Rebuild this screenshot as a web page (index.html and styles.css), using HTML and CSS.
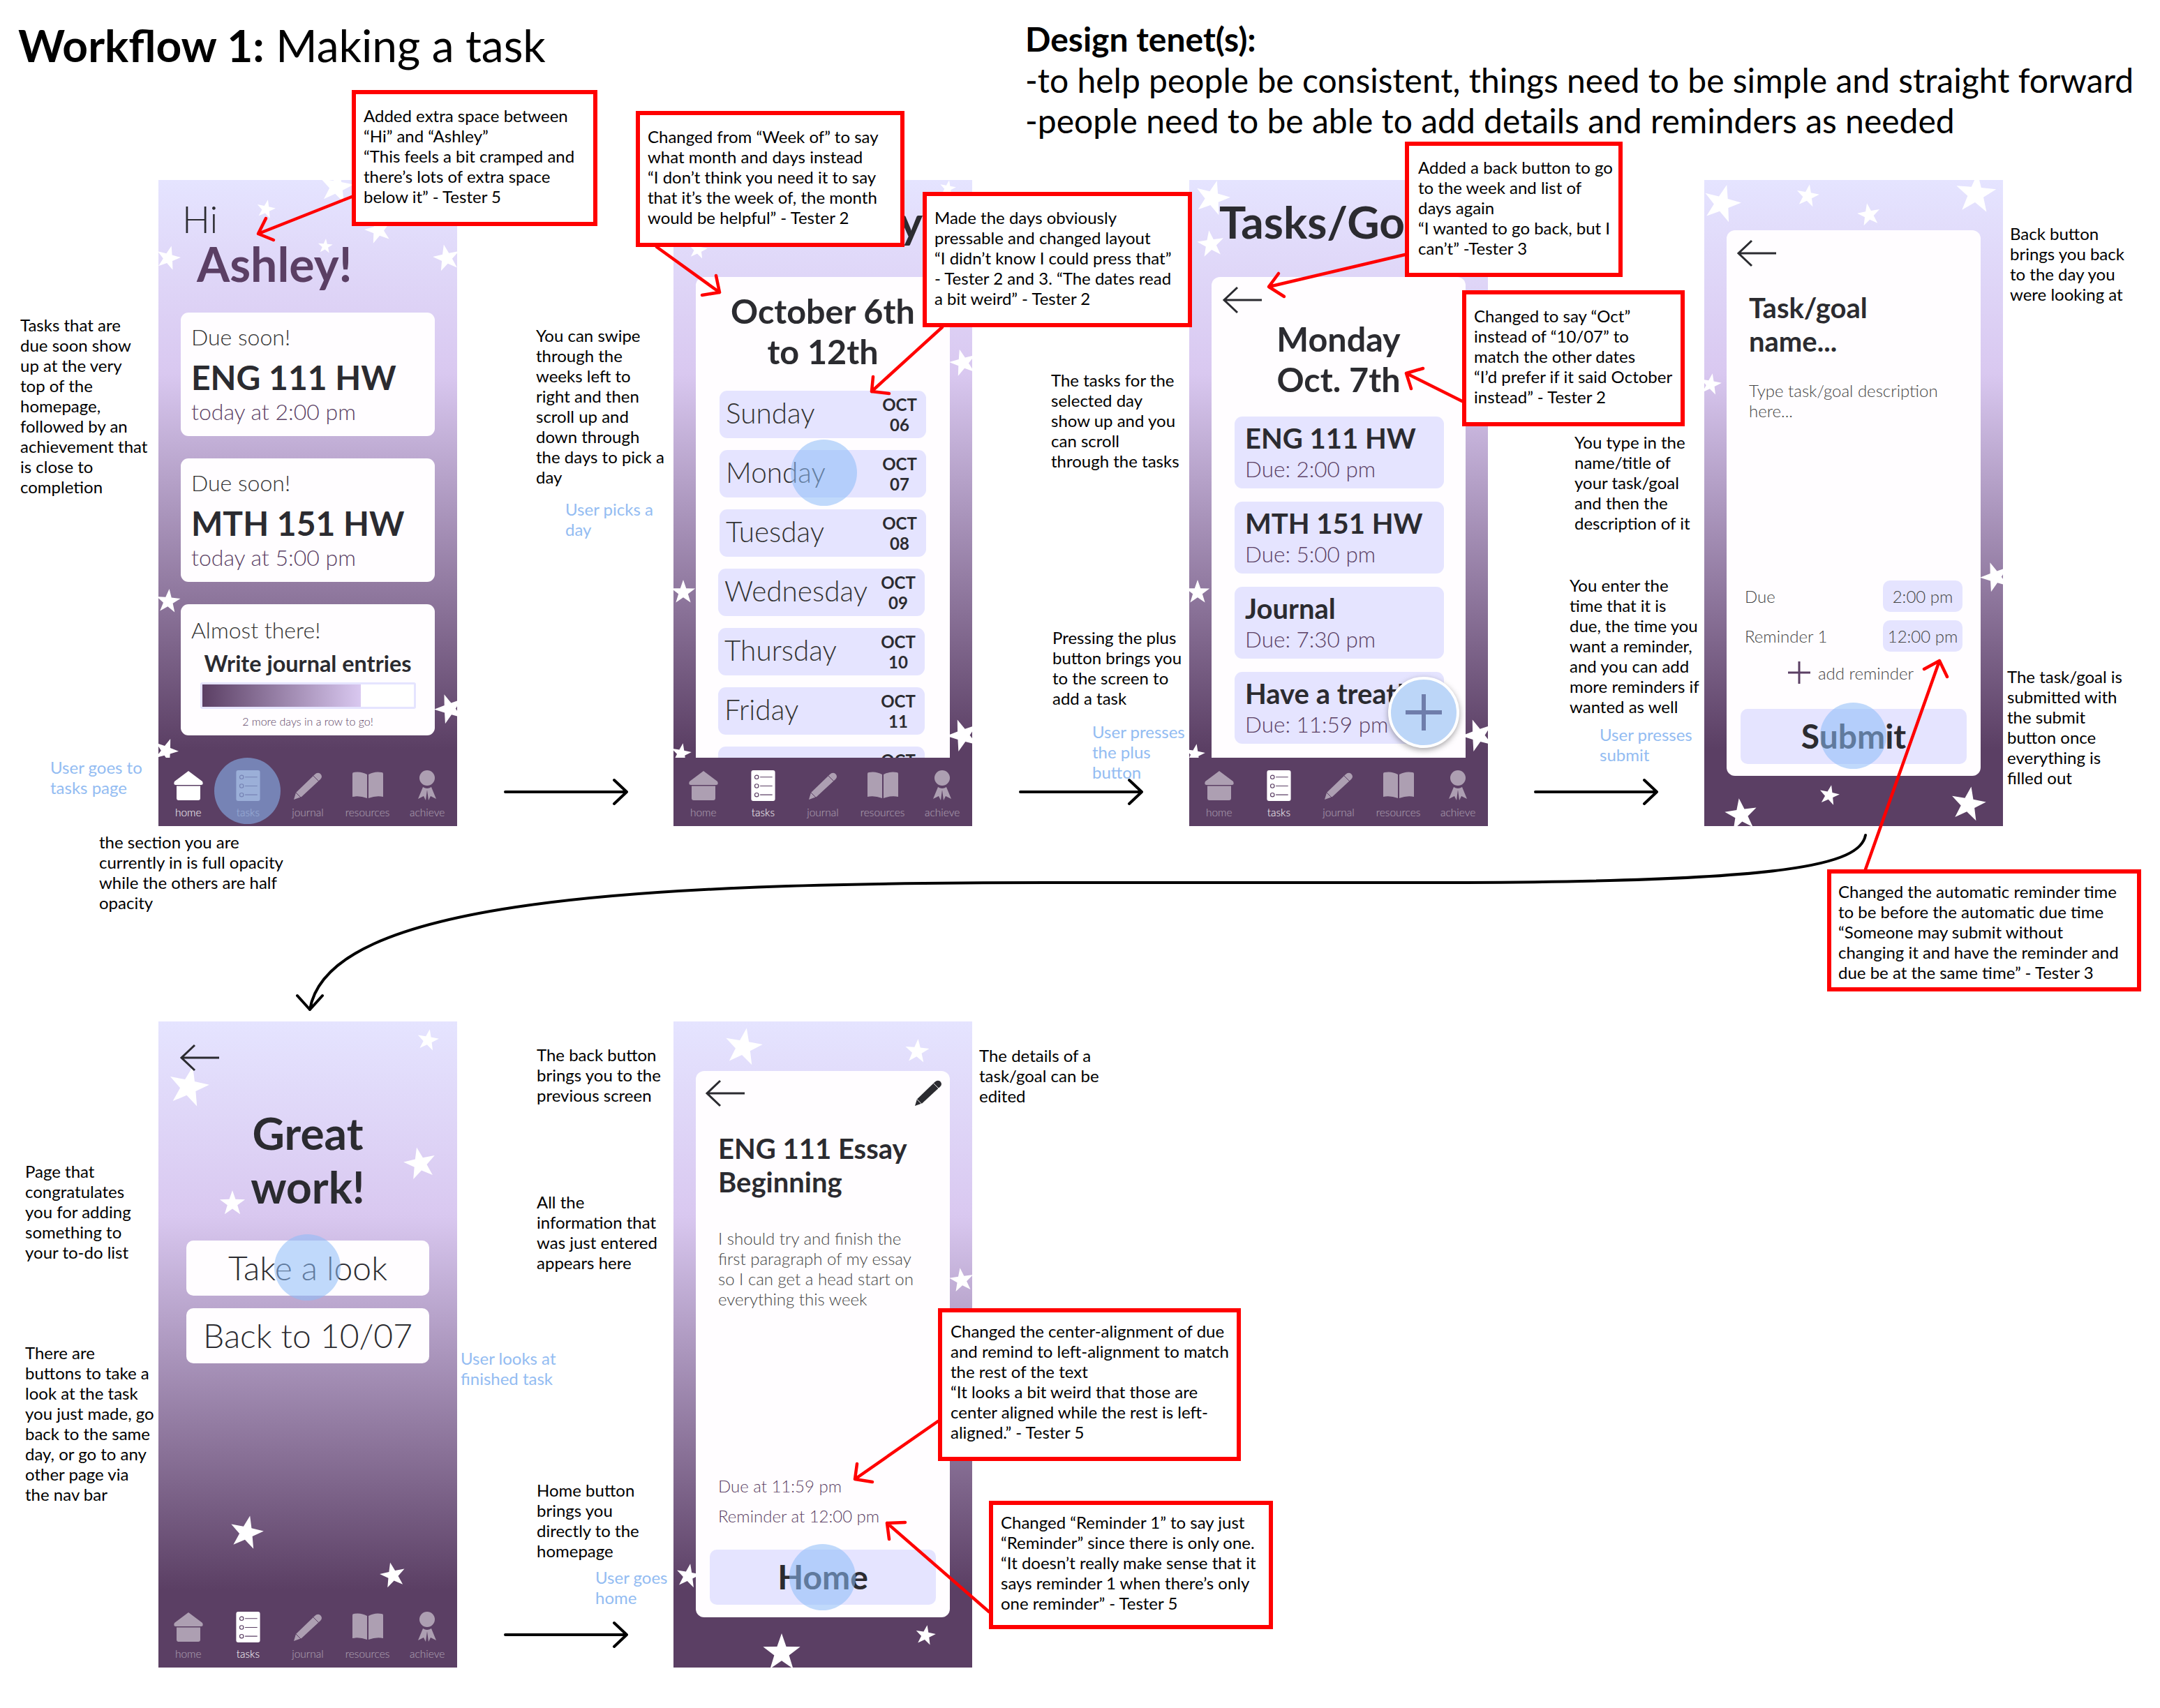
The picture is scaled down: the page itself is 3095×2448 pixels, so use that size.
FILE: index.html
```html
<!DOCTYPE html>
<html lang="en">
<head>
    <meta charset="UTF-8">
    <title>Workflow 1: Making a task</title>
    <link rel="stylesheet" href="styles.css">
</head>
<body>
<!-- icon sprite -->
<svg class="sprite" width="0" height="0">
    <defs>
        <polygon id="star" points="0,-1 0.235,-0.324 0.951,-0.309 0.38,0.124 0.588,0.809 0,0.4 -0.588,0.809 -0.38,0.124 -0.951,-0.309 -0.235,-0.324" fill="#fff"/>
        <symbol id="i-home" viewBox="0 0 42 42">
            <path d="M21 0 L41 15 Q43 20 39 20 H3 Q-1 20 1 15 Z M4 21.5 H38 V39 Q38 42 35 42 H7 Q4 42 4 39 Z" fill="currentColor"/>
        </symbol>
        <symbol id="i-tasks" viewBox="0 0 35 45">
            <rect width="35" height="45" rx="3" fill="currentColor"/>
            <g fill="none" stroke="#5b3f64" stroke-width="1.2">
                <circle cx="8" cy="10" r="2.8"/><circle cx="8" cy="23" r="2.8"/><circle cx="8" cy="36" r="2.8"/>
                <path d="M13 10 H31 M13 23 H31 M13 36 H31"/>
            </g>
        </symbol>
        <symbol id="i-pencil" viewBox="0 0 42 40">
            <path d="M1 40 L4 30 L31 4 Q35 0 39 3 Q43 7 39 11 L12 36 Z" fill="currentColor"/>
            <path d="M29 6 L37 14 M4 30 L11 37" stroke="#5b3f64" stroke-width="1"/>
        </symbol>
        <symbol id="i-book" viewBox="0 0 44 40">
            <path d="M21 4 Q12 -1 2 1 Q0 1 0 3 V36 Q10 34 21 38 Z M23 4 Q32 -1 42 1 Q44 1 44 3 V36 Q34 34 23 38 Z" fill="currentColor"/>
        </symbol>
        <symbol id="i-ribbon" viewBox="0 0 28 44">
            <circle cx="14" cy="11" r="11" fill="currentColor"/>
            <path d="M8 24 L1 41 L9 37 L12 43 L14 28 L16 43 L19 37 L27 41 L20 24 Q14 28 8 24 Z" fill="currentColor"/>
        </symbol>
        <symbol id="i-back" viewBox="0 0 58 40">
            <path d="M57 20 H3 M22 2 L3 20 L22 38" fill="none" stroke="#2b2b30" stroke-width="3"/>
        </symbol>
    </defs>
</svg>

<div class="board">
    <h1 class="title"><b>Workflow 1:</b> Making a task</h1>
    <div class="tenets">
        <b>Design tenet(s):</b><br>
        -to help people be consistent, things need to be simple and straight forward<br>
        -people need to be able to add details and reminders as needed
    </div>

    <!-- screen 1: home -->
    <section class="phone p1">
        <svg class="stars" viewBox="0 0 428 926">
            <use href="#star" transform="translate(255 10) rotate(10) scale(25)"/>
            <use href="#star" transform="translate(154 42) rotate(12) scale(14)"/>
            <use href="#star" transform="translate(315 72) rotate(-15) scale(20)"/>
            <use href="#star" transform="translate(239 95) rotate(5) scale(11)"/>
            <use href="#star" transform="translate(14 112) rotate(15) scale(18)"/>
            <use href="#star" transform="translate(413 112) rotate(-12) scale(20)"/>
            <use href="#star" transform="translate(14 604) rotate(5) scale(18)"/>
            <use href="#star" transform="translate(417 758) rotate(-20) scale(22)"/>
            <use href="#star" transform="translate(11 818) rotate(20) scale(18)"/>
        </svg>
        <div class="hi">Hi</div>
        <div class="name">Ashley!</div>
        <div class="cards">
            <div class="card">
                <div class="card-head">Due soon!</div>
                <div class="card-task">ENG 111 HW</div>
                <div class="card-when">today at 2:00 pm</div>
            </div>
            <div class="card">
                <div class="card-head">Due soon!</div>
                <div class="card-task">MTH 151 HW</div>
                <div class="card-when">today at 5:00 pm</div>
            </div>
            <div class="card card-goal">
                <div class="card-head">Almost there!</div>
                <div class="goal-name">Write journal entries</div>
                <div class="bar"><div class="bar-fill" style="width: 75%"></div></div>
                <div class="goal-note">2 more days in a row to go!</div>
            </div>
        </div>
        <nav class="nav">
            <div class="nav-item on"><svg class="ic-home"><use href="#i-home"/></svg><span>home</span></div>
            <div class="nav-item"><svg class="ic-tasks"><use href="#i-tasks"/></svg><span>tasks</span></div>
            <div class="nav-item"><svg class="ic-pencil"><use href="#i-pencil"/></svg><span>journal</span></div>
            <div class="nav-item"><svg class="ic-book"><use href="#i-book"/></svg><span>resources</span></div>
            <div class="nav-item"><svg class="ic-ribbon"><use href="#i-ribbon"/></svg><span>achieve</span></div>
        </nav>
        <div class="tap tap-nav"></div>
    </section>

    <!-- screen 2: week -->
    <section class="phone p2">
        <svg class="stars" viewBox="0 0 428 926">
            <use href="#star" transform="translate(35 100) rotate(10) scale(14)"/>
            <use href="#star" transform="translate(393 12) rotate(10) scale(12)"/>
            <use href="#star" transform="translate(415 262) rotate(-15) scale(20)"/>
            <use href="#star" transform="translate(14 591) rotate(0) scale(18)"/>
            <use href="#star" transform="translate(415 796) rotate(-20) scale(24)"/>
            <use href="#star" transform="translate(11 822) rotate(10) scale(15)"/>
        </svg>
        <div class="page-title page-title-end">Today!</div>
        <div class="panel panel-list">
            <div class="panel-title">October 6th<br>to 12th</div>
            <div class="days">
                <div class="day"><span>Sunday</span><div class="date">OCT<br>06</div></div>
                <div class="day"><span>Monday</span><div class="date">OCT<br>07</div></div>
                <div class="day"><span>Tuesday</span><div class="date">OCT<br>08</div></div>
                <div class="day day-left"><span>Wednesday</span><div class="date">OCT<br>09</div></div>
                <div class="day day-left"><span>Thursday</span><div class="date">OCT<br>10</div></div>
                <div class="day day-left"><span>Friday</span><div class="date">OCT<br>11</div></div>
                <div class="day day-left"><span>Saturday</span><div class="date">OCT<br>12</div></div>
            </div>
        </div>
        <nav class="nav">
            <div class="nav-item"><svg class="ic-home"><use href="#i-home"/></svg><span>home</span></div>
            <div class="nav-item on"><svg class="ic-tasks"><use href="#i-tasks"/></svg><span>tasks</span></div>
            <div class="nav-item"><svg class="ic-pencil"><use href="#i-pencil"/></svg><span>journal</span></div>
            <div class="nav-item"><svg class="ic-book"><use href="#i-book"/></svg><span>resources</span></div>
            <div class="nav-item"><svg class="ic-ribbon"><use href="#i-ribbon"/></svg><span>achieve</span></div>
        </nav>
        <div class="tap tap-monday"></div>
    </section>

    <!-- screen 3: day -->
    <section class="phone p3">
        <svg class="stars" viewBox="0 0 428 926">
            <use href="#star" transform="translate(33 26) rotate(15) scale(26)"/>
            <use href="#star" transform="translate(31 92) rotate(-8) scale(20)"/>
            <use href="#star" transform="translate(12 591) rotate(0) scale(18)"/>
            <use href="#star" transform="translate(414 796) rotate(-20) scale(24)"/>
            <use href="#star" transform="translate(8 823) rotate(10) scale(15)"/>
        </svg>
        <div class="page-title">Tasks/Goals</div>
        <div class="panel panel-list">
            <svg class="back back-day"><use href="#i-back"/></svg>
            <div class="panel-title panel-title-day">Monday<br>Oct. 7th</div>
            <div class="tasks">
                <div class="task"><div class="task-name">ENG 111 HW</div><div class="task-due">Due: 2:00 pm</div></div>
                <div class="task"><div class="task-name">MTH 151 HW</div><div class="task-due">Due: 5:00 pm</div></div>
                <div class="task"><div class="task-name">Journal</div><div class="task-due">Due: 7:30 pm</div></div>
                <div class="task"><div class="task-name">Have a treat!</div><div class="task-due">Due: 11:59 pm</div></div>
            </div>
        </div>
        <nav class="nav">
            <div class="nav-item"><svg class="ic-home"><use href="#i-home"/></svg><span>home</span></div>
            <div class="nav-item on"><svg class="ic-tasks"><use href="#i-tasks"/></svg><span>tasks</span></div>
            <div class="nav-item"><svg class="ic-pencil"><use href="#i-pencil"/></svg><span>journal</span></div>
            <div class="nav-item"><svg class="ic-book"><use href="#i-book"/></svg><span>resources</span></div>
            <div class="nav-item"><svg class="ic-ribbon"><use href="#i-ribbon"/></svg><span>achieve</span></div>
        </nav>
        <div class="fab"><svg viewBox="0 0 52 52"><path d="M0 26 H52 M26 0 V52" stroke="#6f7dab" stroke-width="6"/></svg></div>
    </section>

    <!-- screen 4: new task -->
    <section class="phone p4">
        <svg class="stars" viewBox="0 0 428 926">
            <use href="#star" transform="translate(25 34) rotate(15) scale(28)"/>
            <use href="#star" transform="translate(148 23) rotate(10) scale(17)"/>
            <use href="#star" transform="translate(236 50) rotate(-10) scale(17)"/>
            <use href="#star" transform="translate(389 20) rotate(5) scale(30)"/>
            <use href="#star" transform="translate(9 293) rotate(10) scale(16)"/>
            <use href="#star" transform="translate(417 569) rotate(-20) scale(22)"/>
            <use href="#star" transform="translate(179 882) rotate(12) scale(15)"/>
            <use href="#star" transform="translate(53 910) rotate(-8) scale(24)"/>
            <use href="#star" transform="translate(378 895) rotate(10) scale(26)"/>
        </svg>
        <div class="panel panel-form">
            <svg class="back back-form"><use href="#i-back"/></svg>
            <div class="form-title">Task/goal<br>name...</div>
            <div class="form-desc">Type task/goal description<br>here...</div>
            <div class="fields">
                <div class="field"><span>Due</span><div class="pill">2:00 pm</div></div>
                <div class="field"><span>Reminder 1</span><div class="pill">12:00 pm</div></div>
                <div class="add-reminder">
                    <svg viewBox="0 0 32 32"><path d="M0 16 H32 M16 0 V32" stroke="#5b3f64" stroke-width="3"/></svg>
                    <span>add reminder</span>
                </div>
            </div>
            <div class="big-button">Submit</div>
        </div>
        <div class="tap tap-submit"></div>
    </section>

    <!-- screen 5: done -->
    <section class="phone p5">
        <svg class="stars" viewBox="0 0 428 926">
            <use href="#star" transform="translate(386 27) rotate(10) scale(16)"/>
            <use href="#star" transform="translate(43 94) rotate(12) scale(30)"/>
            <use href="#star" transform="translate(375 204) rotate(-12) scale(24)"/>
            <use href="#star" transform="translate(106 261) rotate(0) scale(19)"/>
            <use href="#star" transform="translate(126 733) rotate(12) scale(25)"/>
            <use href="#star" transform="translate(336 794) rotate(-12) scale(19)"/>
        </svg>
        <svg class="back back-done"><use href="#i-back"/></svg>
        <div class="done-title">Great<br>work!</div>
        <div class="done-button">Take a look</div>
        <div class="done-button">Back to 10/07</div>
        <nav class="nav">
            <div class="nav-item"><svg class="ic-home"><use href="#i-home"/></svg><span>home</span></div>
            <div class="nav-item on"><svg class="ic-tasks"><use href="#i-tasks"/></svg><span>tasks</span></div>
            <div class="nav-item"><svg class="ic-pencil"><use href="#i-pencil"/></svg><span>journal</span></div>
            <div class="nav-item"><svg class="ic-book"><use href="#i-book"/></svg><span>resources</span></div>
            <div class="nav-item"><svg class="ic-ribbon"><use href="#i-ribbon"/></svg><span>achieve</span></div>
        </nav>
        <div class="tap tap-look"></div>
    </section>

    <!-- screen 6: task details -->
    <section class="phone p6">
        <svg class="stars" viewBox="0 0 428 926">
            <use href="#star" transform="translate(100 37) rotate(10) scale(28)"/>
            <use href="#star" transform="translate(349 43) rotate(5) scale(18)"/>
            <use href="#star" transform="translate(413 371) rotate(-8) scale(18)"/>
            <use href="#star" transform="translate(21 795) rotate(10) scale(18)"/>
            <use href="#star" transform="translate(155 905) rotate(0) scale(28)"/>
            <use href="#star" transform="translate(361 880) rotate(10) scale(15)"/>
        </svg>
        <div class="panel panel-detail">
            <div class="detail-top">
                <svg class="back"><use href="#i-back"/></svg>
                <svg class="edit" viewBox="0 0 42 40"><path d="M1 40 L4 30 L31 4 Q35 0 39 3 Q43 7 39 11 L12 36 Z" fill="#2b2b30"/><path d="M29 6 L37 14 M4 30 L11 37" stroke="#fff" stroke-width="1"/></svg>
            </div>
            <div class="form-title detail-title">ENG 111 Essay<br>Beginning</div>
            <div class="form-desc detail-desc">I should try and finish the<br>first paragraph of my essay<br>so I can get a head start on<br>everything this week</div>
            <div class="detail-times">
                <div>Due at 11:59 pm</div>
                <div>Reminder at 12:00 pm</div>
            </div>
            <div class="big-button">Home</div>
        </div>
        <div class="tap tap-home"></div>
    </section>

    <!-- arrows -->
    <svg class="marks" viewBox="0 0 3095 2448">
        <g fill="none" stroke="#000" stroke-width="4" stroke-linecap="round" stroke-linejoin="round">
            <path d="M724 1135 H897 M880 1118 L898 1135 L880 1152"/>
            <path d="M1462 1135 H1635 M1618 1118 L1636 1135 L1618 1152"/>
            <path d="M2200 1135 H2373 M2356 1118 L2374 1135 L2356 1152"/>
            <path d="M724 2343 H897 M880 2326 L898 2343 L880 2360"/>
            <path d="M2673 1197 C2665 1240 2560 1263 2100 1265 L1500 1265 C900 1265 470 1291 444 1447 M426 1427 L444 1447 L462 1427"/>
        </g>
        <g fill="none" stroke="#f00" stroke-width="4.5" stroke-linecap="round" stroke-linejoin="round">
            <path d="M504 282 L370 335 M381 313 L370 335 L392 344"/>
            <path d="M941 354 L1031 419 M1026 395 L1031 419 L1006 423"/>
            <path d="M1350 469 L1249 561 M1251 540 L1249 561 L1274 564"/>
            <path d="M2013 365 L1818 411 M1832 392 L1818 411 L1840 425"/>
            <path d="M2095 575 L2015 535 M2039 528 L2015 535 L2022 557"/>
            <path d="M2673 1246 L2779 947 M2757 959 L2779 947 L2790 970"/>
            <path d="M1344 2037 L1225 2120 M1228 2098 L1225 2120 L1250 2124"/>
            <path d="M1417 2310 L1271 2183 M1297 2182 L1271 2183 L1274 2206"/>
        </g>
    </svg>

    <!-- tester feedback -->
    <div class="callout c1">Added extra space between<br>“Hi” and “Ashley”<br>“This feels a bit cramped and<br>there’s lots of extra space<br>below it” - Tester 5</div>
    <div class="callout c2">Changed from “Week of” to say<br>what month and days instead<br>“I don’t think you need it to say<br>that it’s the week of, the month<br>would be helpful” - Tester 2</div>
    <div class="callout c3">Made the days obviously<br>pressable and changed layout<br>“I didn’t know I could press that”<br>- Tester 2 and 3. “The dates read<br>a bit weird” - Tester 2</div>
    <div class="callout c4">Added a back button to go<br>to the week and list of<br>days again<br>“I wanted to go back, but I<br>can’t” -Tester 3</div>
    <div class="callout c5">Changed to say “Oct”<br>instead of “10/07” to<br>match the other dates<br>“I’d prefer if it said October<br>instead” - Tester 2</div>
    <div class="callout c6">Changed the automatic reminder time<br>to be before the automatic due time<br>“Someone may submit without<br>changing it and have the reminder and<br>due be at the same time” - Tester 3</div>
    <div class="callout c7">Changed the center-alignment of due<br>and remind to left-alignment to match<br>the rest of the text<br>“It looks a bit weird that those are<br>center aligned while the rest is left-<br>aligned.” - Tester 5</div>
    <div class="callout c8">Changed “Reminder 1” to say just<br>“Reminder” since there is only one.<br>“It doesn’t really make sense that it<br>says reminder 1 when there’s only<br>one reminder” - Tester 5</div>

    <!-- side notes -->
    <p class="note n1">Tasks that are<br>due soon show<br>up at the very<br>top of the<br>homepage,<br>followed by an<br>achievement that<br>is close to<br>completion</p>
    <p class="note n2">the section you are<br>currently in is full opacity<br>while the others are half<br>opacity</p>
    <p class="note user n3">User goes to<br>tasks page</p>
    <p class="note n4">You can swipe<br>through the<br>weeks left to<br>right and then<br>scroll up and<br>down through<br>the days to pick a<br>day</p>
    <p class="note user n5">User picks a<br>day</p>
    <p class="note n6">The tasks for the<br>selected day<br>show up and you<br>can scroll<br>through the tasks</p>
    <p class="note n7">Pressing the plus<br>button brings you<br>to the screen to<br>add a task</p>
    <p class="note user n8">User presses<br>the plus<br>button</p>
    <p class="note n9">You type in the<br>name/title of<br>your task/goal<br>and then the<br>description of it</p>
    <p class="note n10">You enter the<br>time that it is<br>due, the time you<br>want a reminder,<br>and you can add<br>more reminders if<br>wanted as well</p>
    <p class="note user n11">User presses<br>submit</p>
    <p class="note n12">Back button<br>brings you back<br>to the day you<br>were looking at</p>
    <p class="note n13">The task/goal is<br>submitted with<br>the submit<br>button once<br>everything is<br>filled out</p>
    <p class="note n14">Page that<br>congratulates<br>you for adding<br>something to<br>your to-do list</p>
    <p class="note n15">There are<br>buttons to take a<br>look at the task<br>you just made, go<br>back to the same<br>day, or go to any<br>other page via<br>the nav bar</p>
    <p class="note n16">The back button<br>brings you to the<br>previous screen</p>
    <p class="note n17">All the<br>information that<br>was just entered<br>appears here</p>
    <p class="note n18">Home button<br>brings you<br>directly to the<br>homepage</p>
    <p class="note user n19">User goes<br>home</p>
    <p class="note user n20">User looks at<br>finished task</p>
    <p class="note n21">The details of a<br>task/goal can be<br>edited</p>
</div>
</body>
</html>
```

FILE: styles.css
```css
body {
    margin: 0;
    background: #fff;
    font-family: Lato, "Open Sans", sans-serif;
    color: #000;
}
.sprite {
    position: absolute;
}
.board {
    position: relative;
    width: 3095px;
    height: 2448px;
    overflow: hidden;
}

/* headings */
.title {
    position: absolute;
    left: 26px;
    top: 29px;
    margin: 0;
    font-size: 64px;
    line-height: 72px;
    font-weight: 400;
    white-space: nowrap;
}
.tenets {
    position: absolute;
    left: 1469px;
    top: 27px;
    font-size: 48px;
    line-height: 58.5px;
    white-space: nowrap;
}

/* phones sit on the free canvas */
.phone {
    position: absolute;
    width: 428px;
    height: 926px;
    display: flex;
    flex-direction: column;
    overflow: hidden;
    background: linear-gradient(#e5e4ff 0%, #d9c8f0 30%, #5b3f64 88%);
    color: #2b2b30;
}
.p1 { left: 227px; top: 258px; }
.p2 { left: 965px; top: 258px; }
.p3 { left: 1704px; top: 258px; }
.p4 { left: 2442px; top: 258px; }
.p5 { left: 227px; top: 1464px; }
.p6 { left: 965px; top: 1464px; }
.stars {
    position: absolute;
    left: 0;
    top: 0;
    width: 428px;
    height: 926px;
}
.phone > *:not(.stars):not(.tap):not(.fab) {
    position: relative;
}

/* nav bar */
.nav {
    display: flex;
    height: 98px;
    flex: none;
    margin-top: auto;
    background: #5b3f64;
    color: #fff;
}
.nav-item {
    flex: 1;
    display: flex;
    flex-direction: column;
    align-items: center;
    padding-top: 18px;
    opacity: 0.5;
}
.nav-item.on {
    opacity: 1;
}
.nav-item svg {
    height: 44px;
    flex: none;
}
.nav-item span {
    margin-top: 6px;
    font-size: 15.5px;
    line-height: 20px;
    font-weight: 300;
}
.ic-home { width: 42px; }
.ic-tasks { width: 35px; }
.ic-pencil { width: 42px; }
.ic-book { width: 44px; }
.ic-ribbon { width: 28px; }

/* screen 1 */
.hi {
    margin: 26px 0 0 34px;
    font-size: 53px;
    line-height: 60px;
    font-weight: 300;
    color: #2b2b30;
}
.name {
    margin: -4px 0 0 55px;
    font-size: 68px;
    line-height: 76px;
    font-weight: 700;
    color: #5b3f64;
}
.cards {
    display: flex;
    flex-direction: column;
    gap: 32px;
    margin: 32px 32px 0;
}
.card {
    height: 177px;
    padding: 15px 15px 0;
    box-sizing: border-box;
    background: #fffdff;
    border-radius: 11px;
}
.card-goal {
    height: 188px;
    padding-top: 17px;
}
.card-head {
    font-size: 32px;
    line-height: 40px;
    font-weight: 300;
    color: #333;
}
.card-task {
    margin-top: 12px;
    font-size: 48px;
    line-height: 52px;
    font-weight: 700;
}
.card-when {
    margin-top: 1px;
    font-size: 32px;
    line-height: 44px;
    font-weight: 300;
    color: #5b3f64;
}
.goal-name {
    margin-top: 8px;
    font-size: 32.4px;
    line-height: 40px;
    font-weight: 700;
    text-align: center;
}
.bar {
    width: 309px;
    height: 38px;
    box-sizing: border-box;
    margin: 7px auto 0;
    background: #fff;
    border: 3px solid #e5e4ff;
    border-radius: 3px;
    overflow: hidden;
}
.bar-fill {
    height: 100%;
    background: linear-gradient(90deg, #5b3f64, #d9c8f0);
}
.goal-note {
    margin-top: 8px;
    font-size: 16px;
    line-height: 20px;
    font-weight: 300;
    color: #5b3f64;
    text-align: center;
}

/* white panels */
.page-title {
    height: 139px;
    flex: none;
    box-sizing: border-box;
    padding: 22px 0 0 43px;
    font-size: 64px;
    line-height: 76px;
    font-weight: 700;
    white-space: nowrap;
}
.page-title-end {
    padding: 22px 53px 0 0;
    text-align: right;
}
.panel {
    background: #fffdff;
    margin: 0 32px;
    flex: none;
    width: 364px;
    box-sizing: border-box;
    border-radius: 12px;
}
.panel-list {
    flex: 1;
    min-height: 0;
    overflow: hidden;
    border-radius: 12px 12px 0 0;
}
.panel-title {
    padding-top: 19px;
    font-size: 48.5px;
    line-height: 58px;
    font-weight: 700;
    text-align: center;
}
.panel-title-day {
    padding-top: 6px;
}
.days {
    display: flex;
    flex-direction: column;
    gap: 17px;
    margin: 28px 0 0 34px;
}
.day {
    display: flex;
    align-items: center;
    justify-content: space-between;
    flex: none;
    width: 296px;
    height: 68px;
    box-sizing: border-box;
    padding: 0 10px 0 9px;
    background: #e5e4ff;
    border-radius: 11px;
    font-size: 40.5px;
    font-weight: 300;
    color: #333;
}
.day span {
    margin-top: -5px;
}
.day-left {
    margin-left: -2px;
}
.date {
    width: 56px;
    font-size: 24px;
    line-height: 29px;
    font-weight: 700;
    text-align: center;
    color: #2b2b30;
}
.back {
    display: block;
    width: 58px;
    height: 40px;
}
.back-day {
    margin: 13px 0 0 15px;
}
.tasks {
    display: flex;
    flex-direction: column;
    gap: 19px;
    margin: 25px 0 0 33px;
}
.task {
    width: 300px;
    height: 103px;
    flex: none;
    box-sizing: border-box;
    padding: 9px 15px 0;
    background: #e5e4ff;
    border-radius: 11px;
}
.task-name {
    font-size: 40px;
    line-height: 44px;
    font-weight: 700;
    white-space: nowrap;
}
.task-due {
    font-size: 31.5px;
    line-height: 44px;
    font-weight: 300;
    color: #5b3f64;
}

/* form + detail */
.panel-form {
    display: flex;
    flex-direction: column;
    height: 782px;
    margin-top: 72px;
    padding-bottom: 17px;
}
.back-form {
    margin: 13px 0 0 14px;
}
.form-title {
    margin: 34px 0 0 32px;
    font-size: 40px;
    line-height: 48px;
    font-weight: 700;
}
.form-desc {
    margin: 32px 0 0 32px;
    font-size: 24px;
    line-height: 29px;
    font-weight: 300;
    color: #444;
}
.fields {
    margin-top: auto;
}
.field {
    display: flex;
    align-items: center;
    justify-content: space-between;
    margin: 0 26px 12px 26px;
    font-size: 24px;
    font-weight: 300;
    color: #444;
}
.pill {
    width: 114px;
    height: 45px;
    line-height: 45px;
    background: #e5e4ff;
    border-radius: 10px;
    text-align: center;
}
.add-reminder {
    display: flex;
    align-items: center;
    gap: 11px;
    height: 36px;
    margin: 12px 0 0 88px;
    font-size: 24px;
    font-weight: 300;
    color: #444;
}
.add-reminder svg {
    width: 32px;
    height: 32px;
}
.big-button {
    height: 79px;
    margin: 34px 20px 0;
    background: #e5e4ff;
    border-radius: 10px;
    font-size: 48px;
    line-height: 78px;
    font-weight: 700;
    text-align: center;
}
.panel-detail {
    display: flex;
    flex-direction: column;
    height: 783px;
    margin-top: 71px;
    padding-bottom: 18px;
}
.detail-top {
    display: flex;
    justify-content: space-between;
    padding: 12px 11px 0 13px;
}
.edit {
    width: 40px;
    height: 38px;
}
.detail-title {
    margin-top: 35px;
    line-height: 48px;
}
.detail-desc {
    margin-top: 42px;
}
.detail-times {
    display: flex;
    flex-direction: column;
    gap: 14px;
    margin: auto 0 0 32px;
    font-size: 24px;
    line-height: 29px;
    font-weight: 300;
    color: #5b3f64;
}
.panel-detail .big-button {
    margin-top: 34px;
}

/* screen 5 */
.back-done {
    margin: 32px 0 0 30px;
}
.done-title {
    margin-top: 49px;
    font-size: 64px;
    line-height: 77px;
    font-weight: 700;
    text-align: center;
}
.done-button {
    height: 79px;
    margin: 18px 40px 0;
    background: #fffdff;
    border-radius: 10px;
    font-size: 48px;
    line-height: 77px;
    font-weight: 300;
    text-align: center;
}
.done-title + .done-button {
    margin-top: 39px;
}

/* tap markers and floating button go over the screen */
.tap {
    position: absolute;
    width: 95px;
    height: 95px;
    border-radius: 50%;
    background: rgba(140, 188, 248, 0.55);
}
.tap-nav { left: 80px; top: 828px; }
.tap-monday { left: 168px; top: 372px; }
.tap-submit { left: 166px; top: 749px; }
.tap-look { left: 166px; top: 305px; }
.tap-home { left: 166px; top: 749px; }
.fab {
    position: absolute;
    left: 285px;
    top: 712px;
    width: 102px;
    height: 102px;
    box-sizing: border-box;
    display: flex;
    align-items: center;
    justify-content: center;
    background: #bcd6f8;
    border: 4px solid #fff;
    border-radius: 50%;
    box-shadow: 0 3px 8px rgba(0, 0, 0, 0.35);
}
.fab svg {
    width: 52px;
    height: 52px;
}

/* arrows */
.marks {
    position: absolute;
    left: 0;
    top: 0;
    width: 3095px;
    height: 2448px;
}

/* red feedback boxes */
.callout {
    position: absolute;
    box-sizing: border-box;
    background: #fff;
    border: 6px solid #f00;
    font-size: 24px;
    line-height: 29px;
    white-space: nowrap;
}
.c1 { left: 504px; top: 129px; width: 352px; height: 195px; padding: 16px 0 0 11px; }
.c2 { left: 911px; top: 159px; width: 385px; height: 195px; padding: 16px 0 0 11px; }
.c3 { left: 1322px; top: 275px; width: 386px; height: 194px; padding: 16px 0 0 11px; }
.c4 { left: 2013px; top: 203px; width: 312px; height: 194px; padding: 16px 0 0 13px; }
.c5 { left: 2095px; top: 416px; width: 319px; height: 195px; padding: 16px 0 0 11px; }
.c6 { left: 2618px; top: 1246px; width: 450px; height: 175px; padding: 11px 0 0 10px; }
.c7 { left: 1344px; top: 1875px; width: 434px; height: 219px; padding: 12px 0 0 12px; }
.c8 { left: 1417px; top: 2151px; width: 407px; height: 184px; padding: 10px 0 0 11px; }

/* plain side notes */
.note {
    position: absolute;
    margin: -2px 0 0;
    font-size: 24px;
    line-height: 29px;
    white-space: nowrap;
}
.user { color: #93bcf2; }
.n1 { left: 29px; top: 453px; }
.n2 { left: 142px; top: 1194px; }
.n3 { left: 72px; top: 1087px; }
.n4 { left: 768px; top: 468px; }
.n5 { left: 810px; top: 717px; }
.n6 { left: 1506px; top: 532px; }
.n7 { left: 1508px; top: 901px; }
.n8 { left: 1565px; top: 1036px; }
.n9 { left: 2256px; top: 621px; }
.n10 { left: 2249px; top: 826px; }
.n11 { left: 2292px; top: 1040px; }
.n12 { left: 2880px; top: 322px; }
.n13 { left: 2876px; top: 957px; }
.n14 { left: 36px; top: 1666px; }
.n15 { left: 36px; top: 1926px; }
.n16 { left: 769px; top: 1499px; }
.n17 { left: 769px; top: 1710px; }
.n18 { left: 769px; top: 2123px; }
.n19 { left: 853px; top: 2248px; }
.n20 { left: 660px; top: 1934px; }
.n21 { left: 1403px; top: 1500px; }
```
